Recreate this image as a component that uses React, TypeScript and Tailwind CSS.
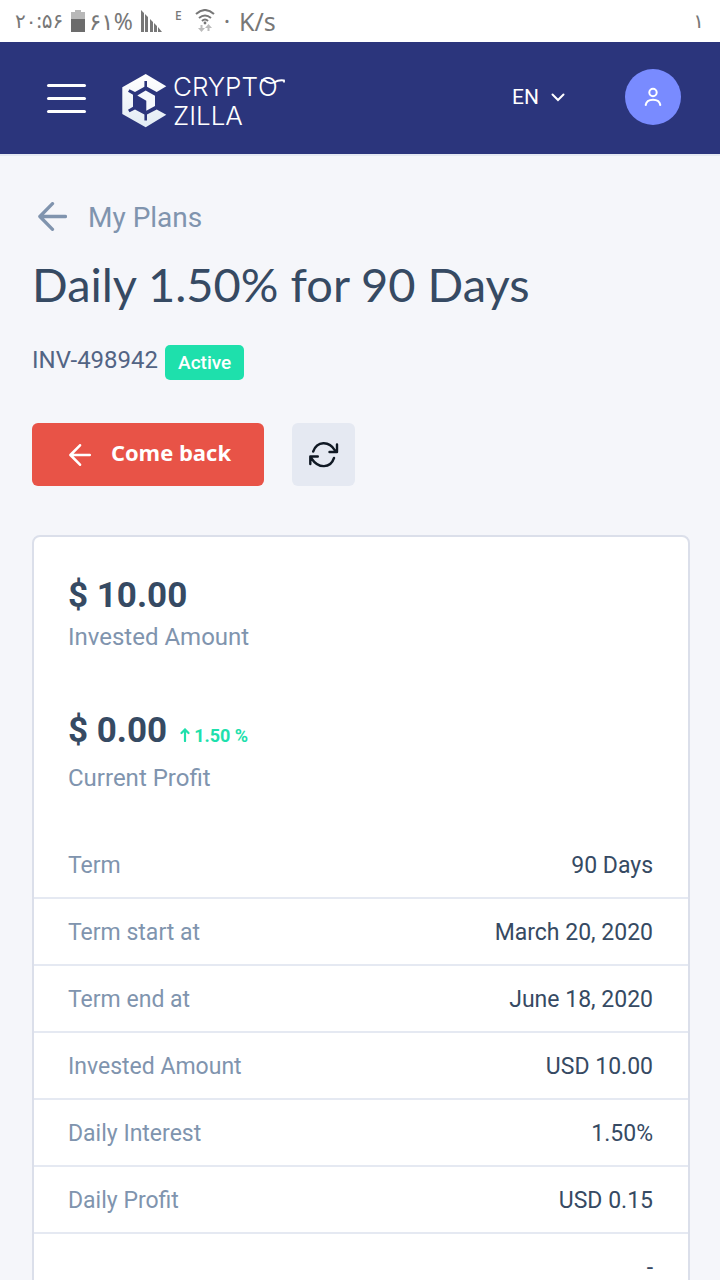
import React from "react";

const details: { label: string; value: string }[] = [
  { label: "Term", value: "90 Days" },
  { label: "Term start at", value: "March 20, 2020" },
  { label: "Term end at", value: "June 18, 2020" },
  { label: "Invested Amount", value: "USD 10.00" },
  { label: "Daily Interest", value: "1.50%" },
  { label: "Daily Profit", value: "USD 0.15" },
  { label: "", value: "-" },
];

function StatusBar() {
  return (
    <div className="flex h-[42px] shrink-0 items-center bg-white pr-4 pl-[15px] font-['Noto_Sans','DejaVu_Sans',sans-serif] text-[#777777]">
      <span className="w-14 text-[20px] leading-8">۲۰:۵۶</span>
      <svg className="w-[14px] shrink-0" viewBox="0 0 14 22" height="22" aria-hidden="true">
        <path d="M4 0h6v2h4v8H0V2h4z" fill="#b8b8b8" />
        <path d="M0 9h14v13H0z" fill="#6c6c6c" />
      </svg>
      <span className="w-14 pl-1 text-[23px] leading-8">۶۱%</span>
      <svg className="w-[22px] shrink-0" viewBox="0 0 22 22" height="22" fill="#777" aria-hidden="true">
        <path d="M0 0l3 3v19H0zM4 4l3 3v15H4zM9 9l3 3v10H9zM13 13l3 3v6h-3zM17 17l4 5h-4z" />
      </svg>
      <span className="w-8 self-start pt-2 pl-3 text-[12px] leading-4 font-medium">E</span>
      <svg className="shrink-0" width="20" height="24" viewBox="0 0 20 24" fill="none" stroke="#777" strokeWidth="2" aria-hidden="true">
        <path d="M1 5q9-8 18 0M4 9q6-5 12 0M7 12q3-3 6 0" />
        <circle cx="10" cy="14" r="1.4" fill="#777" stroke="none" />
        <path d="M6.500 16v5M13.500 22v-5" stroke="#bbb" />
        <path d="M3 19h7l-3.500 4zM10 19h7l-3.500-4z" fill="#bbb" stroke="none" />
      </svg>
      <span className="w-6 text-center text-[24px] leading-8">·</span>
      <span className="text-[25px] leading-8">K/s</span>
      <span className="ml-auto text-[20px] leading-8">۱</span>
    </div>
  );
}

function Logo() {
  return (
    <a href="#home" aria-label="Crypto Zilla" className="ml-9 flex items-center pt-2 text-white">
      <svg width="45" height="54" viewBox="0 0 45 54" className="shrink-0" aria-hidden="true">
        <defs>
          <linearGradient id="logo-shade" x1="0" y1="0" x2="0" y2="1">
            <stop offset="0" stopColor="#ffffff" />
            <stop offset="1" stopColor="#e2ebf4" />
          </linearGradient>
        </defs>
        <path
          d="M23.700 0L44.300 12.200L34.700 18L25 12.700V7H22.400V12.700L13 18L7.500 15.200L6 17.700L11 20.700V32.800L6 35.800L7.500 38.300L13 35.500L22.400 40.500V46.500H25V40.500L34.700 35.500L44.300 40.800L23.700 53.300L0.300 40V13.300Z"
          fill="url(#logo-shade)"
        />
        <path d="M23.700 16.500L33 21.700V32L24.300 36.700V26.700L15.300 21.500Z" fill="#f5f8fc" />
      </svg>
      <span className="ml-[6px] flex flex-col font-['Inter',sans-serif] text-[26px] leading-[29px] font-light">
        <span className="flex items-center">
          CRYPT
          <span className="relative">
            O
            <svg className="absolute top-[6px] left-0" width="28" height="8" viewBox="0 0 28 8" fill="none" stroke="white" strokeWidth="1.800" aria-hidden="true">
              <path d="M3 2.500h4q4 4 9 2q5-3 10-2v2" />
            </svg>
          </span>
        </span>
        <span>ZILLA</span>
      </span>
    </a>
  );
}

function Header() {
  return (
    <header className="flex h-28 shrink-0 items-center bg-[#2b357c] pr-[39px] pb-[2px] pl-[47px] text-white">
      <button type="button" aria-label="Open menu" className="mt-[2px] flex w-[39px] flex-col gap-[10px]">
        <span className="h-[3px] rounded-full bg-white" />
        <span className="h-[3px] rounded-full bg-white" />
        <span className="h-[3px] rounded-full bg-white" />
      </button>
      <Logo />
      <button type="button" aria-haspopup="menu" className="ml-auto flex items-center gap-3 text-[21px] leading-6">
        EN
        <svg width="14" height="10" viewBox="0 0 14 10" fill="none" stroke="white" strokeWidth="2" strokeLinecap="round" aria-hidden="true">
          <path d="M1.500 2.500L7 8l5.500-5.500" />
        </svg>
      </button>
      <button type="button" aria-label="Account" className="ml-[60px] flex size-14 items-center justify-center rounded-full bg-[#798bff]">
        <svg width="18" height="20" viewBox="0 0 18 20" fill="none" stroke="white" strokeWidth="2" strokeLinecap="round" aria-hidden="true">
          <circle cx="9" cy="5.500" r="3.700" />
          <path d="M1.700 18C2.300 14.500 5 12.800 9 12.800S15.700 14.500 16.300 18" />
        </svg>
      </button>
    </header>
  );
}

function BackArrow({ className }: { className: string }) {
  return (
    <svg viewBox="0 0 28 28" className={className} fill="none" stroke="currentColor" strokeWidth="3.200" strokeLinecap="round" strokeLinejoin="round" aria-hidden="true">
      <path d="M14 1.600L1.800 14L14 26.400M2 14h24.500" />
    </svg>
  );
}

function Card() {
  return (
    <section className="mt-[49px] rounded-lg border-2 border-[#dbdfea] bg-white">
      <div className="px-[34px] pt-9">
        <p className="text-[35px] leading-[46px] font-bold text-[#364a63]">$ 10.00</p>
        <p className="text-[24px] leading-9 text-[#8094ae]">Invested Amount</p>
        <p className="mt-[52px] flex items-baseline text-[35px] leading-[48px] font-bold text-[#364a63]">
          $ 0.00
          <span className="ml-[13px] flex items-baseline gap-1 text-[18px] leading-6 text-[#1ee0ac]">
            <svg width="10" height="14" viewBox="0 0 10 14" fill="none" stroke="currentColor" strokeWidth="2.200" strokeLinecap="round" aria-hidden="true">
              <path d="M5 13V2M1.500 5L5 1.500L8.500 5" />
            </svg>
            1.50 %
          </span>
        </p>
        <p className="mt-[5px] text-[24px] leading-9 text-[#8094ae]">Current Profit</p>
      </div>
      <dl className="mt-9 text-[23px]">
        {details.map((item, index) => (
          <div key={index} className="flex h-[67px] items-center justify-between border-b-2 border-[#e5e9f2] pt-[3px] pr-[35px] pl-[34px]">
            <dt className="text-[#8094ae]">{item.label}</dt>
            <dd className="text-[#364a63]">{item.value}</dd>
          </div>
        ))}
      </dl>
    </section>
  );
}

export default function App() {
  return (
    <div className="flex h-dvh flex-col overflow-hidden bg-[#f5f6fa] font-['Roboto',sans-serif]">
      <StatusBar />
      <Header />
      <main className="min-h-0 flex-1 overflow-y-auto border-t-2 border-[#e5e9f2] pt-11 pr-[30px] pb-10 pl-8 [scrollbar-width:none]">
        <a href="#plans" className="flex w-fit items-center gap-[21px] pl-[6px] text-[28px] leading-9 text-[#8094ae]">
          <BackArrow className="mb-1 size-[29px]" />
          My Plans
        </a>
        <h1 className="mt-[15px] font-['Lato',sans-serif] text-[47px] leading-[66px] text-[#364a63]">
          Daily 1.50% for 90 Days
        </h1>
        <p className="mt-7 flex items-center gap-[7px] text-[24px] leading-[35px] text-[#526484]">
          <span className="-mt-1">INV-498942</span>
          <span className="rounded-[5px] bg-[#1ee0ac] px-[13px] text-[19px] leading-[35px] font-medium text-white">Active</span>
        </p>
        <div className="mt-[43px] flex gap-7">
          <button type="button" className="flex h-[63px] w-[232px] items-center justify-center gap-5 rounded-md bg-[#e85347] pl-1 font-['Open_Sans',sans-serif] text-[22px] font-bold text-white">
            <BackArrow className="size-[22px]" />
            <span className="pb-1">Come back</span>
          </button>
          <button type="button" aria-label="Refresh" className="flex size-[63px] items-center justify-center rounded-md bg-[#e5e9f2] text-[#101924]">
            <svg width="30" height="26" viewBox="0 0 30 26" fill="none" stroke="currentColor" strokeWidth="2.400" strokeLinecap="round" strokeLinejoin="round" aria-hidden="true">
              <path d="M4.200 9.500C8-1 20-1.500 26 8.500M28 2.500V10H20.500M25 16C21.500 26.500 9.500 27 2.500 16.500M1.300 22V14.500H8.800" />
            </svg>
          </button>
        </div>
        <Card />
      </main>
    </div>
  );
}
